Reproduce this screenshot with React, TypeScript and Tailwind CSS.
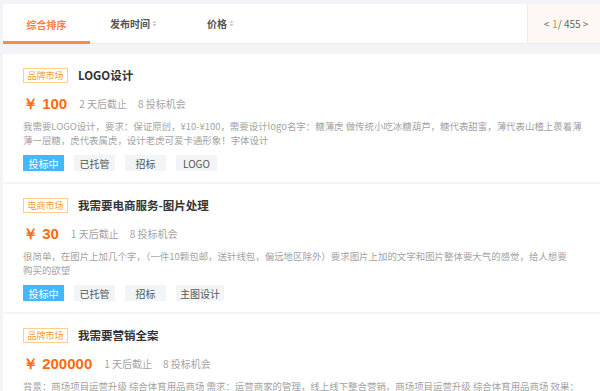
import React from "react";

type Task = {
  market: string;
  title: string;
  price: string;
  days: string;
  bids: string;
  lines: string[];
  tags: string[];
};

const tasks: Task[] = [
  {
    market: "品牌市场",
    title: "LOGO设计",
    price: "100",
    days: "2",
    bids: "8",
    lines: [
      "我需要LOGO设计，要求：保证原创，¥10-¥100，需要设计logo名字：糖薄虎 做传统小吃冰糖葫芦，糖代表甜蜜，薄代表山楂上裹着薄",
      "薄一层糖，虎代表属虎，设计老虎可爱卡通形象！字体设计",
    ],
    tags: ["已托管", "招标", "LOGO"],
  },
  {
    market: "电商市场",
    title: "我需要电商服务-图片处理",
    price: "30",
    days: "1",
    bids: "8",
    lines: [
      "很简单，在图片上加几个字，（一件10颗包邮，送针线包，偏远地区除外）要求图片上加的文字和图片整体要大气的感觉，给人想要",
      "购买的欲望",
    ],
    tags: ["已托管", "招标", "主图设计"],
  },
  {
    market: "品牌市场",
    title: "我需要营销全案",
    price: "200000",
    days: "1",
    bids: "8",
    lines: [
      "背景：商场项目运营升级 综合体育用品商场 需求：运营商家的管理，线上线下整合营销，商场项目运营升级 综合体育用品商场 效果：",
      "",
    ],
    tags: ["已托管", "招标", "营销策划"],
  },
];

function SortIcon() {
  return (
    <svg width="5" height="7" viewBox="0 0 5 7" className="ml-[2px]">
      <path d="M2.5 0.5 L4.5 3 L0.5 3 Z" fill="#c9c9cf" />
      <path d="M2.5 6.5 L4.5 4 L0.5 4 Z" fill="#c9c9cf" />
    </svg>
  );
}

function TaskCard({ task }: { task: Task }) {
  return (
    <div className="h-[128px] shrink-0 bg-white px-[20px] pt-[14px] overflow-hidden">
      <div className="flex h-[15px] items-center">
        <span className="flex h-[15px] w-[45px] items-center justify-center border border-[#ffcf8f] text-[9px] leading-none text-[#ff9a2e]">
          {task.market}
        </span>
        <span className="ml-[10px] text-[11.5px] font-bold leading-none text-[#333]">{task.title}</span>
      </div>
      <div className="mt-[10px] flex h-[20px] items-center">
        <span className="font-['Liberation_Sans',sans-serif] text-[15px] font-bold leading-none text-[#ff6a13]">
          ￥ {task.price}
        </span>
        <span className="ml-[12px] text-[10px] text-[#a3a3a3]">{task.days} 天后截止</span>
        <span className="ml-[11px] text-[10px] text-[#a3a3a3]">{task.bids} 投标机会</span>
      </div>
      <div className="mt-[6px] text-[9.45px] leading-[14px] text-[#a3a3a3]">
        {task.lines.map((l, i) => (
          <div key={i} className="h-[14px] whitespace-nowrap">
            {l}
          </div>
        ))}
      </div>
      <div className="mt-[8px] flex gap-[10px]">
        <span className="flex h-[16px] w-[41px] items-center justify-center bg-[#45b7ff] text-[10px] text-white">
          投标中
        </span>
        {task.tags.map((t) => (
          <span
            key={t}
            className="flex h-[16px] min-w-[41px] items-center justify-center bg-[#f1f5f8] px-[4px] text-[10px] text-[#555]"
          >
            {t}
          </span>
        ))}
      </div>
    </div>
  );
}

export default function App() {
  return (
    <div className="h-[391px] overflow-hidden bg-[#f4f4f8] pl-[3px] pt-[4px] font-['Noto_Sans_CJK_SC','Noto_Sans',sans-serif]">
      <div className="flex h-[40px] border-b border-[#ececf0] bg-white">
        <div className="flex w-[87px] items-center justify-center border-b-[3px] border-[#ff8a45] -mb-px pt-[3px] text-[10px] font-bold text-[#ff7f3f]">
          综合排序
        </div>
        <div className="flex w-[87px] items-center justify-center text-[10px] font-bold text-[#555]">
          发布时间
          <SortIcon />
        </div>
        <div className="flex w-[87px] items-center justify-center text-[10px] font-bold text-[#555]">
          价格
          <SortIcon />
        </div>
        <div className="flex-1" />
        <div className="flex w-[73px] items-center justify-center border-l border-[#ececec] bg-[#fdf8f4] pl-[4px] text-[10px] text-[#666]">
          &lt; <span className="ml-[3px] text-[#ff7f3f]">1</span>/ 455 &gt;
        </div>
      </div>
      <div className="mt-[10px] flex flex-col gap-[2px]">
        {tasks.map((t, i) => (
          <TaskCard key={i} task={t} />
        ))}
      </div>
    </div>
  );
}
